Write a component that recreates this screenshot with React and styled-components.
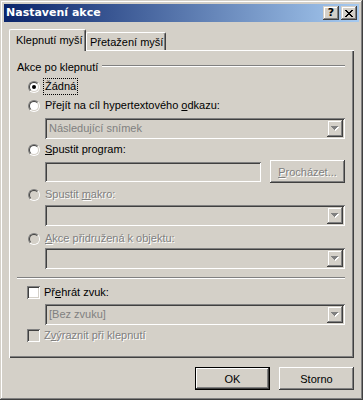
import React from 'react';
import styled, { createGlobalStyle, css } from 'styled-components';

const face = '#D4D0C8';

const Global = createGlobalStyle`
  html, body { margin: 0; padding: 0; background: ${face}; }
  body { font-family: "Liberation Sans", Arial, sans-serif; font-size: 11px; color: #000; }
`;

const raised = css`
  box-shadow: inset -1px -1px 0 #404040, inset 1px 1px 0 #fff, inset -2px -2px 0 #808080, inset 2px 2px 0 ${face};
`;
const raisedSoft = css`
  box-shadow: inset -1px -1px 0 #404040, inset 1px 1px 0 ${face}, inset -2px -2px 0 #808080, inset 2px 2px 0 #fff;
`;
const sunken = css`
  box-shadow: inset 1px 1px 0 #808080, inset -1px -1px 0 #fff, inset 2px 2px 0 #404040, inset -2px -2px 0 ${face};
`;
const disabledText = css`
  color: #808080;
  text-shadow: 1px 1px 0 #fff;
`;

const Window = styled.div`
  width: 363px;
  height: 400px;
  box-sizing: border-box;
  padding: 4px;
  background: ${face};
  ${raisedSoft};
  display: flex;
  flex-direction: column;
`;

const TitleBar = styled.div`
  height: 18px;
  display: flex;
  align-items: center;
  padding: 0 2px 0 2px;
  background: linear-gradient(to right, #0a246a, #a6caf0);
`;

const Title = styled.div`
  flex: 1;
  color: #fff;
  font-family: "DejaVu Sans", Verdana, sans-serif;
  font-weight: bold;
  font-size: 11px;
  line-height: 18px;
  white-space: nowrap;
`;

const CapButton = styled.div`
  width: 16px;
  height: 14px;
  box-sizing: border-box;
  background: ${face};
  ${raisedSoft};
  display: flex;
  align-items: center;
  justify-content: center;
  margin-left: ${(p) => p.$gap || 0}px;
  font-family: "DejaVu Sans", Verdana, sans-serif;
  font-weight: bold;
  font-size: 11px;
  line-height: 14px;
  color: #000;
`;

const Body = styled.div`
  padding: 7px 5px 0 5px;
  display: flex;
  flex-direction: column;
`;

const TabStrip = styled.div`
  display: flex;
  align-items: flex-end;
  height: 21px;
`;

const Tab = styled.div`
  box-sizing: border-box;
  display: flex;
  align-items: center;
  background: ${face};
  border-left: 1px solid #fff;
  border-top: 1px solid #fff;
  border-right: 1px solid #404040;
  border-radius: 2px 2px 0 0;
  box-shadow: inset -1px 0 0 #808080;
  white-space: nowrap;
  ${(p) =>
    p.$active
      ? css`
          width: 77px;
          height: 22px;
          margin-bottom: -1px;
          position: relative;
          z-index: 1;
          padding-left: 6px;
          padding-bottom: 1px;
        `
      : css`
          width: 80px;
          height: 18px;
          padding-left: 3px;
        `}
`;

const Panel = styled.div`
  height: 308px;
  box-sizing: border-box;
  padding: 11px 9px 0 8px;
  box-shadow: inset 1px 1px 0 #fff, inset -1px -1px 0 #404040, inset -2px -2px 0 #808080;
  display: flex;
  flex-direction: column;
`;

const GroupHeader = styled.div`
  display: flex;
  height: 13px;
  line-height: 13px;
  white-space: nowrap;
`;

const GroupLine = styled.div`
  flex: 1;
  margin: 4px 0 0 4px;
  height: 0;
  border-top: 1px solid #808080;
  border-bottom: 1px solid #fff;
`;

const Row = styled.div`
  display: flex;
  align-items: center;
  height: ${(p) => p.$h || 13}px;
  margin-top: ${(p) => p.$mt || 0}px;
  margin-left: ${(p) => p.$ml || 0}px;
`;

const RadioOuter = styled.span`
  width: 12px;
  height: 12px;
  box-sizing: border-box;
  border-radius: 50%;
  border: 1px solid;
  border-color: #808080 #fff #fff #808080;
  display: flex;
  flex: none;
`;

const RadioInner = styled.span`
  flex: 1;
  border-radius: 50%;
  border: 1px solid;
  border-color: #404040 ${face} ${face} #404040;
  background: ${(p) => (p.$disabled ? face : '#fff')};
  display: flex;
  align-items: center;
  justify-content: center;
`;

const Dot = styled.span`
  width: 4px;
  height: 4px;
  border-radius: 50%;
  background: #000;
`;

const CheckBox = styled.span`
  width: 13px;
  height: 13px;
  box-sizing: border-box;
  flex: none;
  background: ${(p) => (p.$disabled ? face : '#fff')};
  ${sunken};
`;

const Label = styled.span`
  margin-left: ${(p) => p.$gap ?? 5}px;
  white-space: nowrap;
  line-height: 13px;
  ${(p) => p.$disabled && disabledText};
  ${(p) =>
    p.$focus &&
    css`
      outline: 1px dotted #000;
      outline-offset: 1px;
    `};
`;

const Combo = styled.div`
  height: 21px;
  box-sizing: border-box;
  padding: 2px;
  margin-top: ${(p) => p.$mt || 0}px;
  margin-left: 28px;
  display: flex;
  background: ${face};
  ${sunken};
`;

const ComboText = styled.div`
  flex: 1;
  padding-left: 2px;
  line-height: 17px;
  color: #808080;
  white-space: nowrap;
`;

const DropButton = styled.div`
  width: 16px;
  box-sizing: border-box;
  ${raisedSoft};
  display: flex;
  align-items: center;
  justify-content: center;
`;

const TextField = styled.div`
  width: 216px;
  height: 20px;
  box-sizing: border-box;
  background: ${face};
  ${sunken};
`;

const PushButton = styled.div`
  width: 75px;
  height: 23px;
  box-sizing: border-box;
  margin-left: ${(p) => p.$ml || 0}px;
  display: flex;
  align-items: center;
  justify-content: center;
  background: ${face};
  ${raised};
  white-space: nowrap;
  ${(p) => p.$disabled && disabledText};
  ${(p) =>
    p.$default &&
    css`
      border: 1px solid #000;
    `};
`;

const Separator = styled.div`
  margin-top: 8px;
  height: 0;
  border-top: 1px solid #808080;
  border-bottom: 1px solid #fff;
`;

const Footer = styled.div`
  display: flex;
  justify-content: flex-end;
  gap: 9px;
  margin-top: 9px;
`;

const Arrow = () => (
  <svg width="8" height="5" shapeRendering="crispEdges">
    <rect x="1" y="1" width="7" height="1" fill="#fff" />
    <rect x="2" y="2" width="5" height="1" fill="#fff" />
    <rect x="3" y="3" width="3" height="1" fill="#fff" />
    <rect x="4" y="4" width="1" height="1" fill="#fff" />
    <rect x="0" y="0" width="7" height="1" fill="#808080" />
    <rect x="1" y="1" width="5" height="1" fill="#808080" />
    <rect x="2" y="2" width="3" height="1" fill="#808080" />
    <rect x="3" y="3" width="1" height="1" fill="#808080" />
  </svg>
);

const CloseGlyph = () => {
  const rows = [
    [0, 1, 6, 7],
    [1, 2, 5, 6],
    [2, 3, 4, 5],
    [3, 4],
    [2, 3, 4, 5],
    [1, 2, 5, 6],
    [0, 1, 6, 7],
  ];
  return (
    <svg width="8" height="7" shapeRendering="crispEdges">
      {rows.map((r, y) => r.map((x) => <rect key={`${x}-${y}`} x={x} y={y} width="1" height="1" fill="#000" />))}
    </svg>
  );
};

const Radio = ({ checked, disabled }) => (
  <RadioOuter>
    <RadioInner $disabled={disabled}>{checked && <Dot />}</RadioInner>
  </RadioOuter>
);

const ComboBox = ({ text, mt }) => (
  <Combo $mt={mt}>
    <ComboText>{text}</ComboText>
    <DropButton>
      <Arrow />
    </DropButton>
  </Combo>
);

export default function App() {
  return (
    <>
      <Global />
      <Window>
        <TitleBar>
          <Title>Nastavení akce</Title>
          <CapButton>?</CapButton>
          <CapButton $gap={2}>
            <CloseGlyph />
          </CapButton>
        </TitleBar>
        <Body>
          <TabStrip>
            <Tab $active>Klepnutí myší</Tab>
            <Tab>Přetažení myší</Tab>
          </TabStrip>
          <Panel>
            <GroupHeader>
              Akce po klepnutí
              <GroupLine />
            </GroupHeader>
            <Row $mt={6} $ml={11}>
              <Radio checked />
              <Label $focus>Žádná</Label>
            </Row>
            <Row $mt={6} $ml={11}>
              <Radio />
              <Label>
                Přejít na cíl hypertextového <u>o</u>dkazu:
              </Label>
            </Row>
            <ComboBox text="Následující snímek" mt={6} />
            <Row $mt={4} $ml={11}>
              <Radio />
              <Label>
                <u>S</u>pustit program:
              </Label>
            </Row>
            <Row $mt={4} $ml={28} $h={23}>
              <TextField />
              <PushButton $ml={9} $disabled>
                <span>
                  <u>P</u>rocházet...
                </span>
              </PushButton>
            </Row>
            <Row $mt={5} $ml={11}>
              <Radio disabled />
              <Label $disabled>
                Spustit <u>m</u>akro:
              </Label>
            </Row>
            <ComboBox text="" mt={4} />
            <Row $mt={6} $ml={11}>
              <Radio disabled />
              <Label $disabled>
                <u>A</u>kce přidružená k objektu:
              </Label>
            </Row>
            <ComboBox text="" mt={3} />
            <Separator />
            <Row $mt={7} $ml={10}>
              <CheckBox />
              <Label $gap={4}>
                Př<u>e</u>hrát zvuk:
              </Label>
            </Row>
            <ComboBox text="[Bez zvuku]" mt={5} />
            <Row $mt={4} $ml={10}>
              <CheckBox $disabled />
              <Label $gap={4} $disabled>
                Z<u>v</u>ýraznit při klepnutí
              </Label>
            </Row>
          </Panel>
          <Footer>
            <PushButton $default>OK</PushButton>
            <PushButton>Storno</PushButton>
          </Footer>
        </Body>
      </Window>
    </>
  );
}
